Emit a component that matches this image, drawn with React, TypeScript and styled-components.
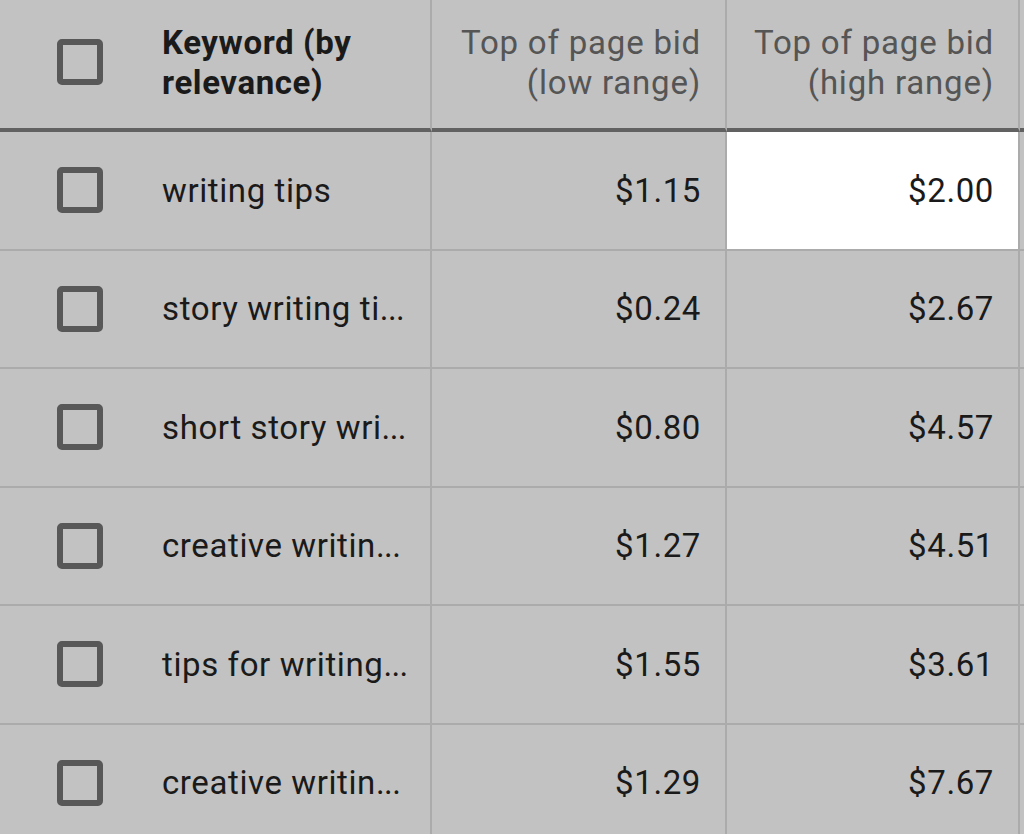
import React from "react";
import styled, { createGlobalStyle } from "styled-components";

const Global = createGlobalStyle`
  html, body { margin: 0; padding: 0; background: #c2c2c2; }
  body { font-family: Roboto, "Noto Sans", "Liberation Sans", sans-serif; }
`;

const Table = styled.div`
  display: grid;
  grid-template-columns: 130px 302px 295px 293px 4px;
  width: 1024px;
  height: 834px;
  overflow: hidden;
  background: #c2c2c2;
`;

const HeadCell = styled.div<{ $align?: "left" | "right"; $divider?: boolean }>`
  box-sizing: border-box;
  height: 132px;
  border-bottom: 4px solid #616161;
  border-right: ${(p) => (p.$divider ? "2px solid #ababab" : "none")};
  display: flex;
  align-items: center;
  justify-content: ${(p) => (p.$align === "right" ? "flex-end" : "flex-start")};
  padding: 0 ${(p) => (p.$align === "right" ? "24px" : "0")} 2px
    ${(p) => (p.$align === "right" ? "0" : "32px")};
  text-align: ${(p) => p.$align ?? "left"};
  font-size: 33px;
  letter-spacing: 0.8px;
  line-height: 40px;
  color: #555555;
`;

const KeywordHead = styled.span`
  font-weight: 700;
  letter-spacing: 0.6px;
  color: #1a1a1a;
`;

const Cell = styled.div<{ $align?: "left" | "right"; $divider?: boolean; $highlight?: boolean }>`
  box-sizing: border-box;
  height: 118.5px;
  border-bottom: 2px solid #ababab;
  border-right: ${(p) => (p.$divider ? "2px solid #ababab" : "none")};
  background: ${(p) => (p.$highlight ? "#ffffff" : "transparent")};
  display: flex;
  align-items: center;
  justify-content: ${(p) => (p.$align === "right" ? "flex-end" : "flex-start")};
  padding-right: ${(p) => (p.$align === "right" ? "24px" : "0")};
  font-size: 33px;
  letter-spacing: 0.6px;
  color: #1a1a1a;
  white-space: nowrap;
`;

const Dots = styled.span`
  letter-spacing: -0.6px;
`;

const BoxCell = styled.div<{ $head?: boolean }>`
  box-sizing: border-box;
  height: ${(p) => (p.$head ? "132px" : "118.5px")};
  border-bottom: ${(p) => (p.$head ? "4px solid #616161" : "2px solid #ababab")};
  display: flex;
  align-items: center;
  padding-left: 57px;
  padding-bottom: ${(p) => (p.$head ? "4px" : "0")};
`;

const CheckBox = styled.span`
  box-sizing: border-box;
  width: 46px;
  height: 46px;
  border: 6px solid #585858;
  border-radius: 5px;
`;

const KeywordCell = styled(Cell)`
  padding-left: 32px;
`;

const rows = [
  { kw: "writing tips", cut: false, low: "$1.15", high: "$2.00", hl: true },
  { kw: "story writing ti", cut: true, low: "$0.24", high: "$2.67" },
  { kw: "short story wri", cut: true, low: "$0.80", high: "$4.57" },
  { kw: "creative writin", cut: true, low: "$1.27", high: "$4.51" },
  { kw: "tips for writing", cut: true, low: "$1.55", high: "$3.61" },
  { kw: "creative writin", cut: true, low: "$1.29", high: "$7.67" },
  { kw: "", cut: false, low: "", high: "" },
];

export default function App() {
  return (
    <>
      <Global />
      <Table>
        <BoxCell $head>
          <CheckBox />
        </BoxCell>
        <HeadCell $divider>
          <KeywordHead>
            Keyword (by
            <br />
            relevance)
          </KeywordHead>
        </HeadCell>
        <HeadCell $align="right" $divider>
          <span>
            Top of page bid
            <br />
            (low range)
          </span>
        </HeadCell>
        <HeadCell $align="right" $divider>
          <span>
            Top of page bid
            <br />
            (high range)
          </span>
        </HeadCell>
        <HeadCell />
        {rows.map((r, i) => (
          <React.Fragment key={i}>
            <BoxCell>{r.kw && <CheckBox />}</BoxCell>
            <KeywordCell $divider>
              {r.kw}
              {r.cut && <Dots>...</Dots>}
            </KeywordCell>
            <Cell $align="right" $divider>
              {r.low}
            </Cell>
            <Cell $align="right" $divider $highlight={r.hl}>
              {r.high}
            </Cell>
            <Cell />
          </React.Fragment>
        ))}
      </Table>
    </>
  );
}
